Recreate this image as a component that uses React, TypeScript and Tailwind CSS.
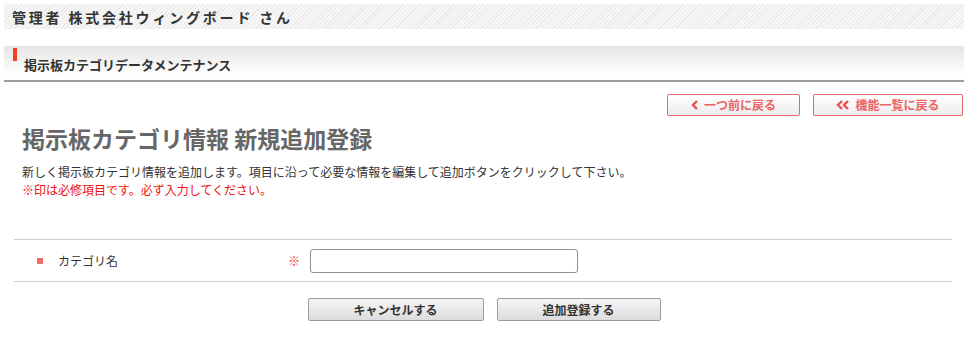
import React from "react";

const font = "font-['Noto_Sans_CJK_JP','Noto_Sans',sans-serif]";

const BackButton: React.FC<{ label: string; double?: boolean; width: string }> = ({ label, double, width }) => (
  <button
    className={`${width} h-[22px] flex items-center justify-center gap-[5px] border border-[#e26a6a] rounded-[2px] bg-[linear-gradient(#ffffff,#ececec)] text-[12px] font-bold text-[#ea6464] leading-none`}
  >
    <svg width={double ? 14 : 8} height="10" viewBox={double ? "0 0 14 10" : "0 0 8 10"} className="shrink-0">
      <polyline points="6,1 2,5 6,9" fill="none" stroke="#ea5050" strokeWidth="2.4" strokeLinejoin="miter" />
      {double && <polyline points="12,1 8,5 12,9" fill="none" stroke="#ea5050" strokeWidth="2.4" />}
    </svg>
    <span>{label}</span>
  </button>
);

const GrayButton: React.FC<{ label: string; width: string }> = ({ label, width }) => (
  <button
    className={`${width} h-[23px] border border-[#9d9d9d] rounded-[2px] bg-[linear-gradient(#f6f6f6,#dcdcdc)] text-[12px] font-bold text-[#333] leading-none`}
  >
    {label}
  </button>
);

export default function App() {
  return (
    <div className={`w-[968px] min-h-[337px] bg-white px-1 pt-1 ${font}`}>
      {/* user bar */}
      <div className="h-[25px] w-[960px] flex items-center pl-2 bg-[repeating-linear-gradient(135deg,#e9e9e9_0px,#e9e9e9_1px,#f7f7f7_1px,#f7f7f7_3px)]">
        <span className="text-[14px] font-bold text-[#333] tracking-[2.8px] leading-none">
          管理者 株式会社ウィングボード さん
        </span>
      </div>

      {/* page header */}
      <div className="mt-[17px] w-[960px] h-[36px] flex border-t border-[#e2e2e2] border-b-2 border-b-[#a29c9c] bg-[linear-gradient(#e6e6e6,#ffffff_85%)]">
        <div className="ml-[9px] mt-[1px] w-[4px] h-[13px] bg-[#f2401c] shrink-0" />
        <h1 className="ml-[7px] self-center text-[13px] font-bold text-[#333] leading-none pt-[2px]">
          掲示板カテゴリデータメンテナンス
        </h1>
      </div>

      {/* nav buttons */}
      <div className="mt-[12px] flex justify-end gap-[13px] pr-[1px]">
        <BackButton label="一つ前に戻る" width="w-[133px]" />
        <BackButton label="機能一覧に戻る" width="w-[150px]" double />
      </div>

      {/* title + description */}
      <div className="pl-[18px]">
        <h2 className="mt-[8px] text-[23px] font-bold text-[#666] leading-[29px]">
          掲示板カテゴリ情報 新規追加登録
        </h2>
        <p className="mt-[10px] text-[12px] text-[#333] leading-[18px]">
          新しく掲示板カテゴリ情報を追加します。項目に沿って必要な情報を編集して追加ボタンをクリックして下さい。
        </p>
        <p className="text-[12px] text-[#f01010] leading-[18px]">
          ※印は必修項目です。必ず入力してください。
        </p>
      </div>

      {/* form */}
      <div className="mt-[40px] ml-[10px] w-[938px] border-t border-b border-[#cfcfcf] h-[43px] flex items-center">
        <div className="ml-[23px] w-[6px] h-[6px] bg-[#f06a6a]" />
        <span className="ml-[15px] w-[230px] text-[12px] text-[#333]">カテゴリ名</span>
        <span className="w-[22px] text-[12px] text-[#f03030]">※</span>
        <input type="text" className="w-[268px] h-[24px] border border-[#8f8f8f] rounded-[3px] bg-white outline-none" />
      </div>

      {/* actions */}
      <div className="mt-[16px] flex justify-center gap-[13px]">
        <GrayButton label="キャンセルする" width="w-[176px]" />
        <GrayButton label="追加登録する" width="w-[164px]" />
      </div>
    </div>
  );
}
